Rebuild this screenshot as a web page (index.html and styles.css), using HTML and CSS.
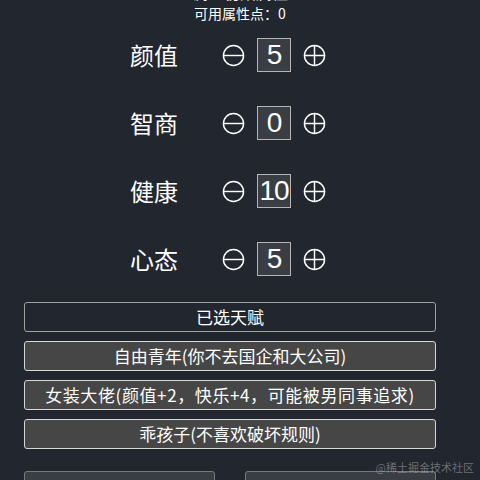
FILE: index.html
```html
<!DOCTYPE html>
<html lang="zh-CN">
<head>
  <meta charset="UTF-8" />
  <meta name="viewport" content="width=device-width, initial-scale=1.0" />
  <title>人生重开 - 属性分配</title>
  <link rel="stylesheet" href="styles.css">
</head>
<body>
  <main class="page">
    <div class="title">调整初始属性</div>
    <div class="points">可用属性点：0</div>

    <section class="attrs">
      <div class="attr-row">
        <span class="attr-name">颜值</span>
        <button class="step" aria-label="减少">
          <svg viewBox="0 0 24 24"><circle cx="12" cy="12" r="10.5"/><path d="M2 12h20"/></svg>
        </button>
        <span class="attr-value">5</span>
        <button class="step" aria-label="增加">
          <svg viewBox="0 0 24 24"><circle cx="12" cy="12" r="10.5"/><path d="M2 12h20M12 2v20"/></svg>
        </button>
      </div>
      <div class="attr-row">
        <span class="attr-name">智商</span>
        <button class="step" aria-label="减少">
          <svg viewBox="0 0 24 24"><circle cx="12" cy="12" r="10.5"/><path d="M2 12h20"/></svg>
        </button>
        <span class="attr-value">0</span>
        <button class="step" aria-label="增加">
          <svg viewBox="0 0 24 24"><circle cx="12" cy="12" r="10.5"/><path d="M2 12h20M12 2v20"/></svg>
        </button>
      </div>
      <div class="attr-row">
        <span class="attr-name">健康</span>
        <button class="step" aria-label="减少">
          <svg viewBox="0 0 24 24"><circle cx="12" cy="12" r="10.5"/><path d="M2 12h20"/></svg>
        </button>
        <span class="attr-value">10</span>
        <button class="step" aria-label="增加">
          <svg viewBox="0 0 24 24"><circle cx="12" cy="12" r="10.5"/><path d="M2 12h20M12 2v20"/></svg>
        </button>
      </div>
      <div class="attr-row">
        <span class="attr-name">心态</span>
        <button class="step" aria-label="减少">
          <svg viewBox="0 0 24 24"><circle cx="12" cy="12" r="10.5"/><path d="M2 12h20"/></svg>
        </button>
        <span class="attr-value">5</span>
        <button class="step" aria-label="增加">
          <svg viewBox="0 0 24 24"><circle cx="12" cy="12" r="10.5"/><path d="M2 12h20M12 2v20"/></svg>
        </button>
      </div>
    </section>

    <section class="talents">
      <div class="talent-head">已选天赋</div>
      <div class="talent">自由青年(你不去国企和大公司)</div>
      <div class="talent wide">女装大佬(颜值+2，快乐+4，可能被男同事追求)</div>
      <div class="talent">乖孩子(不喜欢破坏规则)</div>
    </section>

    <div class="actions">
      <button class="action">随机分配</button>
      <button class="action">开始新人生</button>
    </div>
  </main>
  <div class="watermark">@稀土掘金技术社区</div>
</body>
</html>
```

FILE: styles.css
```css
body {
  margin: 0;
  background: #22262e;
  color: #fff;
  font-family: "Noto Sans CJK SC", "Noto Sans", sans-serif;
  overflow: hidden;
}

.page {
  display: flex;
  flex-direction: column;
  align-items: center;
}

.title {
  font-size: 16px;
  line-height: 20px;
  margin-top: -18px;
}

.points {
  font-size: 14px;
  line-height: 18px;
  margin-top: 2px;
}

.attrs {
  width: 100%;
  margin-top: 16px;
  display: flex;
  flex-direction: column;
  gap: 34px;
}

.attr-row {
  display: flex;
  align-items: center;
  padding-left: 130px;
  height: 34px;
}

.attr-name {
  font-size: 24px;
  width: 48px;
  margin-right: 44px;
  line-height: 34px;
}

.step {
  width: 23px;
  height: 23px;
  padding: 0;
  border: none;
  background: none;
  display: flex;
}

.step svg {
  width: 23px;
  height: 23px;
  fill: none;
  stroke: #fff;
  stroke-width: 1.5;
}

.attr-value {
  box-sizing: border-box;
  width: 34px;
  height: 34px;
  margin: 0 12px;
  background: #3a3d44;
  border: 1px solid #b5b5b5;
  font-family: "Liberation Sans", Arial, sans-serif;
  font-size: 28px;
  line-height: 32px;
  text-align: center;
  letter-spacing: -1px;
}

.talents {
  align-self: flex-start;
  width: 412px;
  margin: 26px 0 0 24px;
  display: flex;
  flex-direction: column;
  gap: 9px;
}

.talent-head,
.talent {
  box-sizing: border-box;
  height: 30px;
  border-radius: 3px;
  font-size: 17px;
  line-height: 28px;
  text-align: center;
}

.talent-head {
  border: 1px solid #a0a0a0;
}

.talent {
  background: #464646;
  border: 1px solid #d6d6d6;
}

.talent.wide {
  letter-spacing: 0.6px;
}

.actions {
  align-self: flex-start;
  width: 412px;
  margin: 22px 0 0 24px;
  display: flex;
  justify-content: space-between;
}

.action {
  width: 191px;
  height: 34px;
  background: #3a3d44;
  border: 1px solid #7a7a7a;
  border-radius: 3px;
  color: #fff;
  font-family: inherit;
  font-size: 17px;
}

.watermark {
  position: absolute;
  right: 6px;
  bottom: 5px;
  font-size: 11px;
  color: rgba(200, 200, 200, 0.45);
  font-family: "Noto Sans CJK SC", serif;
}
```
